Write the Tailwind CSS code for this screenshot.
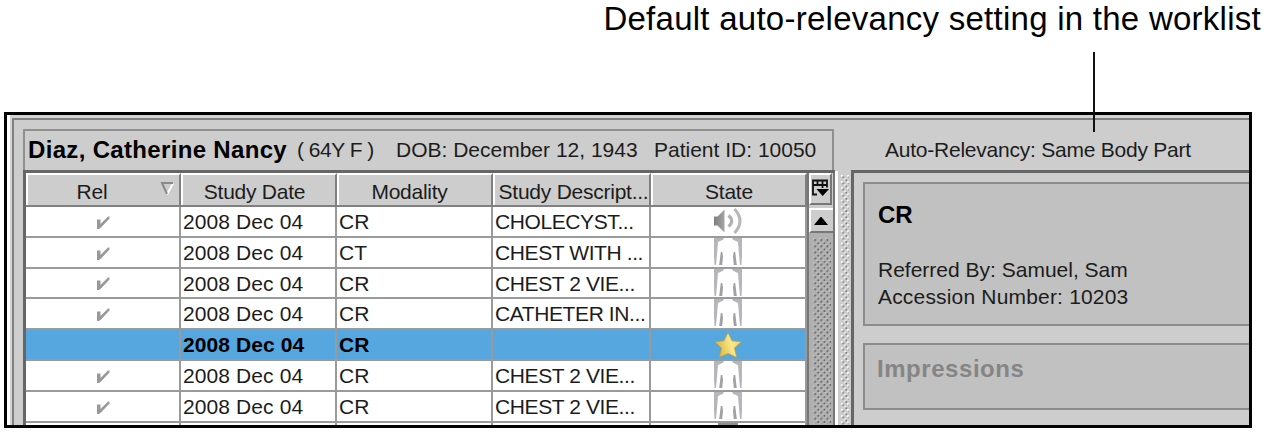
<!DOCTYPE html>
<html lang="en">
<head>
    <meta charset="UTF-8">
    <meta name="viewport" content="width=device-width, initial-scale=1.0">
    <title>Worklist - Auto-Relevancy</title>
    <script src="https://cdn.jsdelivr.net/npm/@tailwindcss/browser@4"></script>
</head>
<body class="relative h-[433px] w-[1271px] overflow-hidden bg-white font-['Liberation_Sans',sans-serif] text-[21px] leading-none text-[#1c1c1c]">
    <!-- shared icons -->
    <svg class="absolute h-0 w-0">
        <defs>
            <linearGradient id="gold" x1="0" y1="0.6" x2="1" y2="0.3">
                <stop offset="0" stop-color="#dfae2c"/>
                <stop offset="0.6" stop-color="#f7e88a"/>
                <stop offset="1" stop-color="#efd060"/>
            </linearGradient>
            <linearGradient id="speaker" x1="0" x2="1">
                <stop offset="0" stop-color="#7d7d7d"/>
                <stop offset="1" stop-color="#a5a5a5"/>
            </linearGradient>
            <pattern id="bumps-dark" width="6.16" height="6.16" patternUnits="userSpaceOnUse">
                <path fill="#c8c8c8" d="M0 0h1.5v1.5H0zM3.1 3.1h1.5v1.5H3.1z"/>
                <path fill="#666" d="M1.2 1.2h1.8v1.8H1.2zM4.3 4.3h1.8v1.8H4.3z"/>
            </pattern>
            <pattern id="bumps-light" width="6.16" height="6.16" patternUnits="userSpaceOnUse">
                <path fill="#fff" d="M0 0h1.7v1.7H0zM3.1 3.1h1.7v1.7H3.1z"/>
                <path fill="#777" d="M1.4 1.4h1.6v1.6H1.4zM4.5 4.5h1.6v1.6H4.5z"/>
            </pattern>
            <symbol id="check" viewBox="0 0 14 14">
                <path fill="#999" d="M1 3.500h3.500v4.500L12 .5h1.500v2L5 11.500 3 13H1z"/>
            </symbol>
            <symbol id="body" viewBox="0 0 28 28">
                <path fill="#b4b6b9" d="M0 0h10L9 1.800 4 4 3.200 14 2 27H.5L0 18zM28 0H18l1 1.800L24 4l.8 10L26 27h1.500l.5-9z"/>
                <path fill="#9fa1a4" d="M6.800 14h1.500L9 18.500 8.200 27H5.200zM21.200 14h-1.500L19 18.500l.8 8.500h3z"/>
            </symbol>
            <symbol id="sound" viewBox="0 0 28 28">
                <path fill="url(#speaker)" d="M0 9.500h3.500L10.500 2.500v23L3.500 18.500H0z"/>
                <path fill="none" stroke="#b0b0b0" stroke-width="3" d="M14.500 8.500q6.500 5.500 0 11"/>
                <path fill="none" stroke="#b8b8b8" stroke-width="3" d="M20.500 2q11 12 0 24"/>
            </symbol>
            <symbol id="star" viewBox="0 0 28 28">
                <path fill="url(#gold)" stroke="#b99a4a" stroke-width="0.800" stroke-linejoin="round" d="M14 2.500l4 8.300 9.500.9-7 6.300 2.300 9.500L14 23.500l-8.800 4L7.500 18l-7-6.300 9.500-.9z"/>
            </symbol>
        </defs>
    </svg>

    <header class="flex h-[112px] justify-end pt-[1px] pr-[10px]">
        <h1 class="text-[33px] leading-[36px] tracking-[0.26px] whitespace-nowrap text-black">Default auto-relevancy setting in the worklist</h1>
    </header>
    <div class="absolute top-[52px] left-[1093px] z-10 h-[80px] w-[2px] bg-[#111]"></div>

    <main class="ml-[4px] flex h-[316px] w-[1248px] border-[3px] border-black bg-[#d4d4d4]">
        <div class="flex w-full border-l-[3px] border-white pt-[3px] pl-[2px]">
            <div class="flex w-full border-t-2 border-l-2 border-[#808080] bg-[#cdcdcd]">
                <!-- worklist -->
                <section class="ml-[9px] flex w-[812px] flex-col pt-[9px]">
                    <div class="flex h-[41px] w-[811px] shrink-0 items-center border-2 border-b-0 border-[#8f8f8f] pb-[2px] pl-[3px] whitespace-nowrap">
                        <span class="w-[269px] text-[24px] font-bold tracking-[0.33px] text-black">Diaz, Catherine Nancy</span>
                        <span class="w-[99px] tracking-[-0.5px]">( 64Y F )</span>
                        <span class="w-[258px]">DOB: December 12, 1943</span>
                        <span>Patient ID: 10050</span>
                    </div>
                    <div class="flex min-h-0 flex-1 border-t-[3px] border-l-[3px] border-[#666]">
                        <div class="w-[781px] overflow-hidden bg-white">
                            <div class="grid h-[34px] grid-cols-[155px_156px_156px_158px_156px] border-b-2 border-[#808080] bg-[#cdcdcd] text-center tracking-[-0.25px] *:border-t-2 *:border-r-2 *:border-l-2 *:border-t-white *:border-r-[#808080] *:border-l-white *:pt-[6px]">
                                <div class="relative pr-[23px]">Rel
                                    <svg class="absolute top-[7px] right-[4px]" width="16" height="14" viewBox="0 0 16 14"><path fill="none" stroke="#fff" stroke-width="2" d="M14 1.500L8 12.500"/><path fill="none" stroke="#8a8a8a" stroke-width="2" d="M14 1H3l5 11"/></svg>
                                </div>
                                <div class="pr-[9px]">Study Date</div>
                                <div class="pr-[11px]">Modality</div>
                                <div class="pl-[3px] whitespace-nowrap">Study Descript...</div>
                                <div>State</div>
                            </div>
                            <div id="rows"></div>
                            <div class="grid h-[4px] grid-cols-[155px_156px_156px_158px_156px] *:border-r-2 *:border-[#9a9a9a]">
                                <div></div><div></div><div></div><div></div>
                                <div class="flex justify-center"><div class="h-full w-[20px] bg-[#8d8d8d]"></div></div>
                            </div>
                        </div>
                        <div class="flex w-[28px] flex-col border-r-2 border-l-2 border-[#777] bg-[#cdcdcd]">
                            <div class="h-[32px] w-[23px] shrink-0 border-2 border-t-white border-r-[#777] border-b-[#777] border-l-white pt-[4px]">
                                <svg width="19" height="18" viewBox="0 0 19 18"><path fill="none" stroke="#111" stroke-width="1.800" d="M6 15.500H2V1.500h14v7M2 6h14M6.500 1.500V6M11.500 1.500V9"/><path d="M5.500 10h12.500L11.700 17z"/></svg>
                            </div>
                            <div class="mt-[3px] flex h-[25px] shrink-0 items-center justify-center border-t-2 border-b-2 border-l-2 border-t-white border-b-[#777] border-l-white pr-[2px]">
                                <svg width="14" height="8" viewBox="0 0 14 8"><path d="M6.500 0h1L14 8H0z"/></svg>
                            </div>
                            <div class="flex-1 bg-[#b0b0b0] pt-[5px] pl-[4px]">
                                <svg width="18" height="186"><rect width="18" height="186" fill="url(#bumps-dark)"/></svg>
                            </div>
                        </div>
                    </div>
                </section>
                <!-- split pane divider -->
                <div class="w-[16px] pt-[51px]">
                    <div class="h-full border-l-[3px] border-white pt-[4px] pl-[3px]">
                        <svg width="8" height="250"><rect width="8" height="250" fill="url(#bumps-light)"/></svg>
                    </div>
                </div>
                <!-- study details -->
                <section class="flex flex-1 flex-col">
                    <div class="h-[50px] pt-[19px] pl-[34px] tracking-[-0.23px] whitespace-nowrap">Auto-Relevancy: Same Body Part</div>
                    <div class="flex-1 border-t-[3px] border-l-[3px] border-[#666] pt-[9px] pl-[9px]">
                        <div class="h-[144px] border-2 border-r-0 border-[#8c8c8c] bg-[#c1c1c1] pl-[13px]">
                            <h2 class="pt-[19px] text-[24px] font-bold text-black">CR</h2>
                            <p class="pt-[32px]">Referred By: Samuel, Sam</p>
                            <p class="pt-[6px] tracking-[0.18px]">Accession Number: 10203</p>
                        </div>
                        <div class="mt-[17px] h-[67px] border-2 border-r-0 border-[#8c8c8c] bg-[#c1c1c1] pt-[12px] pl-[12px]">
                            <h2 class="text-[24px] font-bold tracking-[0.55px] text-[#858585]">Impressions</h2>
                        </div>
                    </div>
                </section>
            </div>
        </div>
    </main>

    <script>
        const studies = [
            { modality: 'CR', desc: 'CHOLECYST...', state: 'sound' },
            { modality: 'CT', desc: 'CHEST WITH ...', state: 'body' },
            { modality: 'CR', desc: 'CHEST 2 VIE...', state: 'body' },
            { modality: 'CR', desc: 'CATHETER IN...', state: 'body' },
            { modality: 'CR', desc: '', state: 'star', selected: true },
            { modality: 'CR', desc: 'CHEST 2 VIE...', state: 'body' },
            { modality: 'CR', desc: 'CHEST 2 VIE...', state: 'body' }
        ];

        const StudyRow = ({ modality, desc, state, selected }) => `
            <div class="grid grid-cols-[155px_156px_156px_158px_156px] whitespace-nowrap *:border-r-2 *:border-b-2 *:border-[#9a9a9a] ${selected ? 'h-[31px] bg-[#56a7df] font-bold text-black' : 'h-[30.8px] bg-white'}">
                <div class="flex items-center justify-center pt-[3px]">${selected ? '' : '<svg width="14" height="14"><use href="#check"/></svg>'}</div>
                <div class="pt-[4px] pl-[2px] tracking-[0.1px]">2008 Dec 04</div>
                <div class="pt-[4px] pl-[2px]">${modality}</div>
                <div class="pt-[4px] pl-[2px] tracking-[-0.4px]">${desc}</div>
                <div class="flex justify-center"><svg width="28" height="28"><use href="#${state}"/></svg></div>
            </div>
        `;

        document.getElementById('rows').innerHTML = studies.map(StudyRow).join('');
    </script>
</body>
</html>
